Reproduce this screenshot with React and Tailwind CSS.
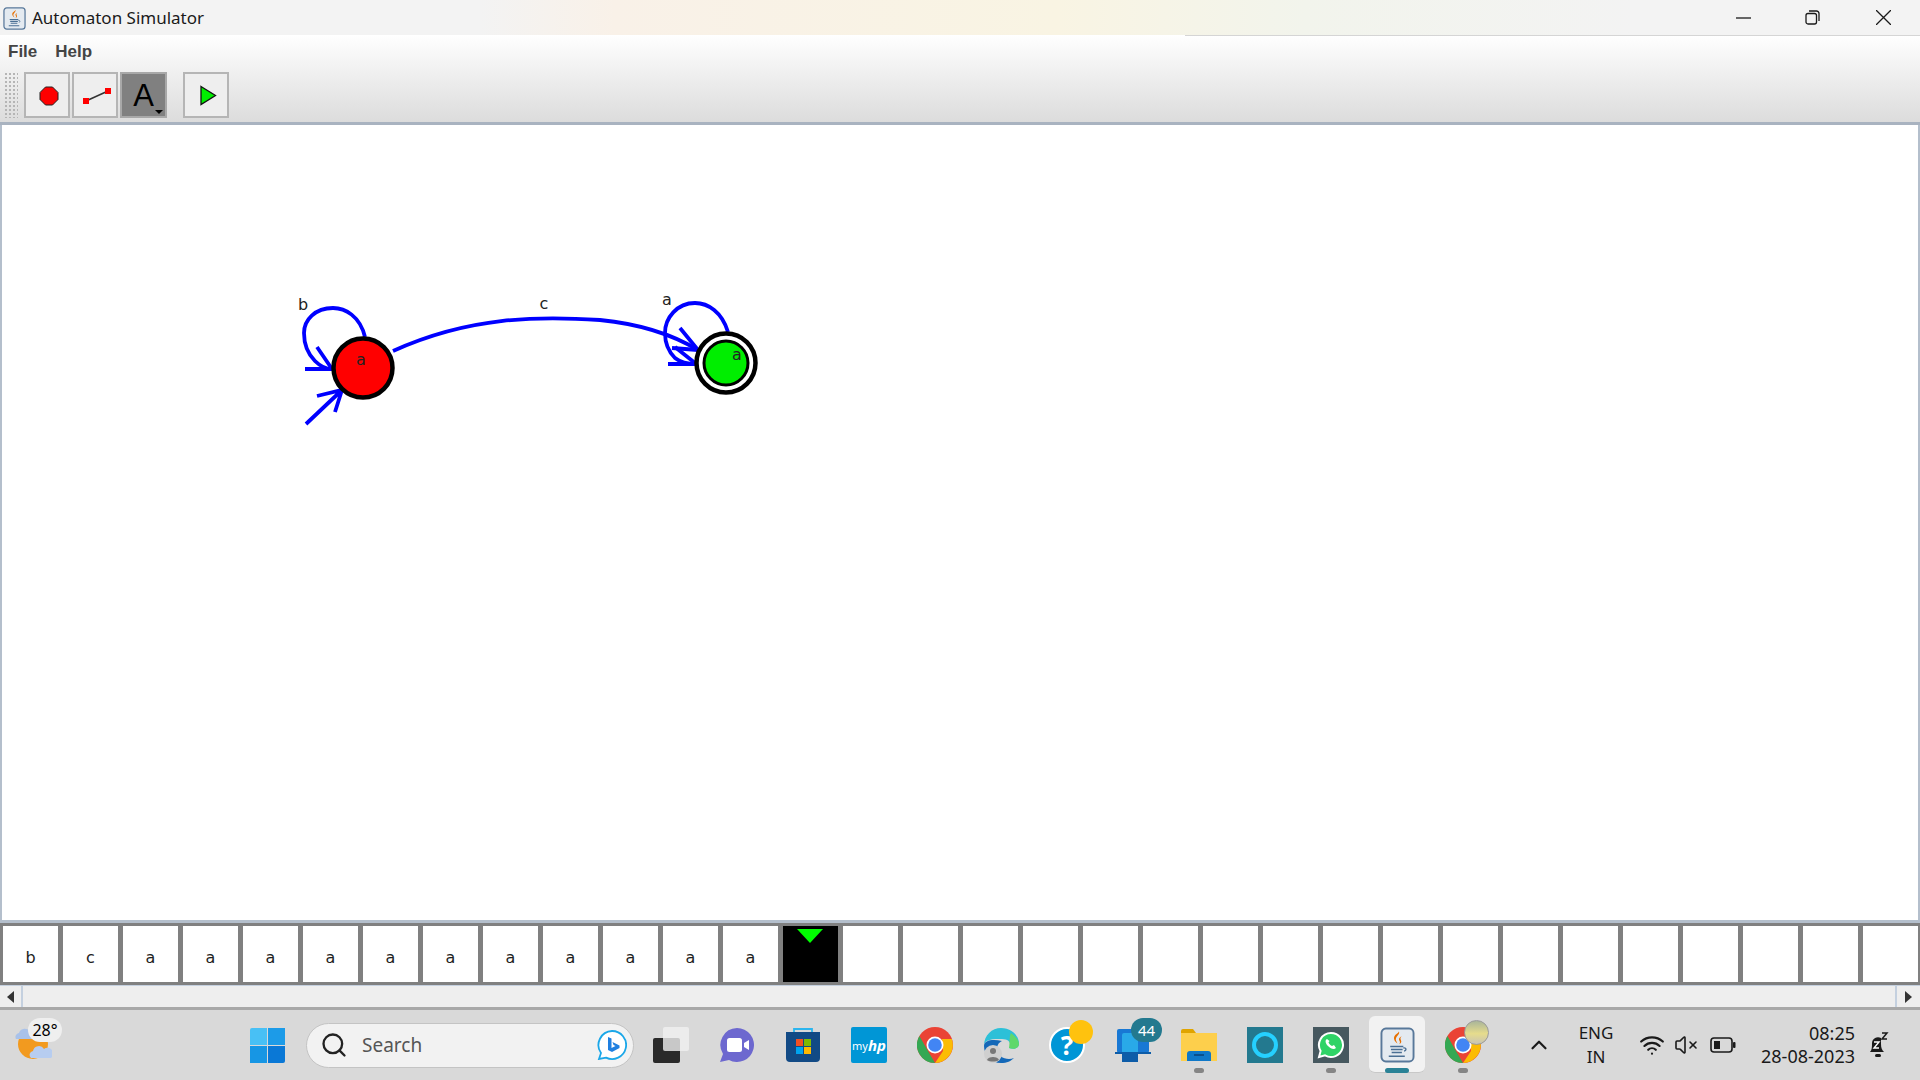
import React from "react";
import { Search, ChevronUp, Wifi, VolumeX } from "lucide-react";

const TAPE = ["b", "c", "a", "a", "a", "a", "a", "a", "a", "a", "a", "a", "a"];
const CELLS = Array.from({ length: 32 }, (_, i) => i);

const JavaIcon = ({ width = 23, height = 23 }) => (
  <svg width={width} height={height} viewBox="0 0 24 24" preserveAspectRatio="none">
    <rect x="1" y="1" width="22" height="22" rx="3" fill="#e4eaf0" stroke="#58789a" strokeWidth="1.300" />
    <path d="M13 3c1 2-3 3.500-2 6 .3.800.8 1.500 1 2-2-1.500-3-3-2-5 .6-1.100 2.500-1.800 3-3z" fill="#e76f00" />
    <path d="M15 6c-2 1-2.500 2-1.500 3.500.5.800 0 1.500-.5 2 1.500-.5 2-1.700 1.300-2.900-.5-1-.3-1.700.7-2.600z" fill="#e76f00" />
    <path d="M7 13h9M7.500 15h8M8 17h7M6 19.500h11" stroke="#4a6f94" strokeWidth="1.100" fill="none" />
    <path d="M16 14c2-.5 2.500 1.500.5 2" stroke="#4a6f94" strokeWidth=".9" fill="none" />
  </svg>
);

const ChromeIcon = () => (
  <svg width="36" height="36" viewBox="0 0 36 36">
    <circle cx="18" cy="18" r="18" fill="#ea4335" />
    <path d="M18 36A18 18 0 0 1 2.400 9L11 24z" fill="#34a853" />
    <path d="M18 36l8-12-1-12h9.800A18 18 0 0 1 18 36z" fill="#fbbc04" />
    <circle cx="18" cy="18" r="8.500" fill="#fff" />
    <circle cx="18" cy="18" r="6.800" fill="#4285f4" />
  </svg>
);

const TaskIcon = ({ children, dot, active }) => (
  <div className="relative w-[66px] h-full flex items-center justify-center">
    {active && <div className="absolute left-[5px] top-[6px] w-[56px] h-[57px] bg-[#f2f2f2] rounded-md border-b border-[#c8c8c8]" />}
    <div className="relative flex items-center justify-center">{children}</div>
    {dot && <div className="absolute bottom-[7px] left-[28px] w-[10px] h-[5px] rounded-full bg-[#858585]" />}
    {active && <div className="absolute bottom-[7px] left-[21px] w-[24px] h-[5px] rounded-full bg-[#2a8296]" />}
  </div>
);

const Toolbar = () => (
  <div className="flex items-start pl-[4px] pt-[4px]">
    <div className="w-[14px] h-[46px] mr-[6px] bg-[radial-gradient(#b5b5b5_1px,transparent_1px)] bg-[length:4px_4px]" />
    <button className="w-[46px] h-[46px] mr-[2px] bg-[#eeeeee] border-2 border-[#b5b5b5] flex items-center justify-center pl-[3px] pt-[1px]">
      <svg width="22" height="22" viewBox="0 0 22 22">
        <path d="M7.500 2h7L20 7.500v7L14.500 20h-7L2 14.500v-7z" fill="#ff0000" stroke="#222" strokeWidth="1" />
      </svg>
    </button>
    <button className="w-[46px] h-[46px] mr-[2px] bg-[#eeeeee] border-2 border-[#b5b5b5] flex items-center justify-center pl-[4px] pt-[2px]">
      <svg width="28" height="16" viewBox="0 0 28 16">
        <path d="M3 13 L25 3" stroke="#333" strokeWidth="1.500" />
        <rect x="0" y="10" width="6" height="6" fill="#ff0000" />
        <rect x="22" y="0" width="6" height="6" fill="#ff0000" />
      </svg>
    </button>
    <button className="relative w-[47px] h-[46px] bg-[#808080] border-2 border-[#a8a8a8] flex items-center justify-center">
      <span className="font-['Liberation_Sans',sans-serif] text-[31px] leading-none text-black">A</span>
      <span className="absolute right-[2px] bottom-[2px] w-0 h-0 border-l-[4px] border-r-[4px] border-t-[4px] border-l-transparent border-r-transparent border-t-black" />
    </button>
    <button className="w-[46px] h-[46px] ml-[16px] bg-[#eeeeee] border-2 border-[#b5b5b5] flex items-center justify-center pl-[4px] pt-[1px]">
      <svg width="18" height="21" viewBox="0 0 18 21">
        <path d="M2 1.500 L16.500 10.500 L2 19.500 z" fill="#00ee00" stroke="#111" strokeWidth="1.300" />
      </svg>
    </button>
  </div>
);

const Diagram = () => (
  <svg width="1920" height="798" viewBox="0 125 1920 798" className="block">
    <g fill="none" stroke="#0000ff" strokeWidth="3.800">
      {/* self loop on a */}
      <path d="M365 337 C360 316 345 308 333 308 C315 308 304 320 304 333 C304 345 309 355 315 361 C320 366 326 369 332 369" />
      <path d="M305 369 H332 M317 347 L332 369" />
      {/* start arrow */}
      <path d="M306 424 L342 390 M317 396 L342 390 L335 412" />
      {/* a to b */}
      <path d="M393 351 C470 316 540 316 600 320 C640 324 670 333 698 350" />
      <path d="M672 348 L698 350 M680 328 L698 350" />
      {/* self loop on b */}
      <path d="M728 332 C722 312 708 303 695 303 C677 303 665 318 665 333 C665 345 670 353 675 358 C680 362 686 364 696 364" />
      <path d="M668 364 H696 M675 347 L695 363" />
    </g>
    <circle cx="363" cy="368" r="29.500" fill="#ff0000" stroke="#000" strokeWidth="4.500" />
    <circle cx="726" cy="363" r="29.500" fill="#fff" stroke="#000" strokeWidth="4.500" />
    <circle cx="726" cy="363" r="22" fill="#00ee00" stroke="#000" strokeWidth="3" />
    <g fontFamily="'DejaVu Sans', sans-serif" fontSize="16" fill="#222">
      <text x="303" y="310" textAnchor="middle">b</text>
      <text x="544" y="309" textAnchor="middle">c</text>
      <text x="667" y="305" textAnchor="middle">a</text>
      <text x="361" y="365" textAnchor="middle">a</text>
      <text x="737" y="360" textAnchor="middle">a</text>
    </g>
  </svg>
);

const Tape = () => (
  <div className="h-[62px] bg-[#808080] pt-[3px] overflow-hidden flex gap-[5px] pl-[3px] shrink-0">
    {CELLS.map((i) => (
      <div
        key={i}
        className={`relative w-[55px] h-[56px] shrink-0 flex items-center justify-center pt-[7px] font-['DejaVu_Sans',sans-serif] text-[16px] text-[#222] ${i === 13 ? "bg-black" : "bg-white"}`}
      >
        {TAPE[i]}
        {i === 13 && (
          <span className="absolute left-[14px] top-[3px] w-0 h-0 border-l-[13px] border-r-[13px] border-t-[14px] border-l-transparent border-r-transparent border-t-[#00ff00]" />
        )}
      </div>
    ))}
  </div>
);

const Taskbar = () => (
  <div className="h-[70px] bg-[#d9d9d9] flex items-center relative font-['Noto_Sans',sans-serif] text-[#1a1a1a]">
    {/* weather */}
    <div className="relative w-[70px] h-full shrink-0">
      <svg width="38" height="36" viewBox="0 0 38 36" className="absolute left-[14px] top-[15px]">
        <circle cx="19" cy="19" r="15" fill="#f29a1f" />
        <path d="M2 14a4 4 0 0 1 3-6 6 6 0 0 1 11-1 4 4 0 0 1 4 7z" fill="#a9c2ea" />
        <path d="M17 33a4 4 0 0 1 2-7 6 6 0 0 1 11-2 5 5 0 0 1 7 9z" fill="#b7cdf0" />
      </svg>
      <span className="absolute left-[28px] top-[8px] w-[34px] h-[24px] rounded-full bg-[#efefef] text-[16px] leading-[24px] text-center text-black">28°</span>
    </div>
    {/* start */}
    <div className="w-[35px] h-[35px] ml-[180px] shrink-0 grid grid-cols-2 gap-[1px]">
      <div className="bg-[#48c0f5] rounded-tl-[2px]" />
      <div className="bg-[#1c9be8]" />
      <div className="bg-[#1796e4]" />
      <div className="bg-[#0a78d6] rounded-br-[2px]" />
    </div>
    {/* search */}
    <div className="ml-[21px] w-[328px] h-[45px] shrink-0 rounded-full bg-[#f2f2f2] border border-[#c4c4c4] flex items-center pl-[13px] pr-[6px]">
      <Search size={28} strokeWidth={2} className="text-[#222]" />
      <span className="ml-[14px] text-[19px] text-[#555] flex-1">Search</span>
      <svg width="30" height="30" viewBox="0 0 30 30">
        <path d="M15 1a14 14 0 1 1-6 26.600L2 29l2-6A14 14 0 0 1 15 1z" fill="#fff" stroke="#1ba7e8" strokeWidth="1.800" />
        <path d="M11 7l3.500 1.500V18l4-2-2-1-1-3 7 3.500V18l-7.500 4L11 20z" fill="#1f7fe0" />
      </svg>
    </div>
    {/* pinned apps */}
    <div className="flex h-full ml-[4px] shrink-0">
      <TaskIcon>
        <div className="relative w-[36px] h-[36px]">
          <div className="absolute left-0 bottom-0 w-[27px] h-[25px] rounded-[2px] bg-[#2a2a2a]" />
          <div className="absolute right-0 top-0 w-[26px] h-[24px] rounded-[2px] bg-[#f0f0f0]/80" />
        </div>
      </TaskIcon>
      <TaskIcon>
        <svg width="36" height="36" viewBox="0 0 36 36">
          <path d="M18 1a17 17 0 1 1-8 32L1 35l3-8A17 17 0 0 1 18 1z" fill="#6d68cf" />
          <rect x="8" y="11" width="15" height="14" rx="2.500" fill="#fff" />
          <path d="M25 16l5-3v10l-5-3z" fill="#fff" />
        </svg>
      </TaskIcon>
      <TaskIcon>
        <svg width="36" height="36" viewBox="0 0 36 36">
          <path d="M9 6V2h18v4" fill="none" stroke="#2cb5ee" strokeWidth="1.800" />
          <path d="M1 5h34v26a4 4 0 0 1-4 4H5a4 4 0 0 1-4-4z" fill="#124a85" />
          <rect x="11" y="12" width="7" height="7" fill="#f25022" />
          <rect x="19" y="12" width="7" height="7" fill="#7fba00" />
          <rect x="11" y="20" width="7" height="7" fill="#00a4ef" />
          <rect x="19" y="20" width="7" height="7" fill="#ffb900" />
        </svg>
      </TaskIcon>
      <TaskIcon>
        <div className="w-[36px] h-[36px] bg-[#0096d6] rounded-[2px] flex items-center justify-center text-white text-[11px] leading-none">
          my<span className="italic font-bold text-[15px]">hp</span>
        </div>
      </TaskIcon>
      <TaskIcon><ChromeIcon /></TaskIcon>
      <TaskIcon>
        <svg width="36" height="36" viewBox="0 0 36 36">
          <path d="M1 19C1 8 9 1 18 1c10 0 18 7 18 16 0 4-5 6-10 4 3-3 1-9-7-9-9 0-18 0-18 7z" fill="#2cc0d8" />
          <path d="M28 6c4 3 8 7 8 11 0 4-5 6-10 4 1-5 0-11 2-15z" fill="#5fd86a" />
          <path d="M1 19c0 9 7 17 17 17 6 0 10-2 13-5-7 3-17-1-17-9 0-3 1-6 5-8-9-2-18-1-18 5z" fill="#1468b8" />
          <circle cx="10" cy="27" r="9" fill="#cfcfcf" />
          <circle cx="10" cy="24" r="3" fill="#777" />
          <path d="M4 33c1-4 11-4 12 0-3 2-9 2-12 0z" fill="#777" />
        </svg>
      </TaskIcon>
      <TaskIcon>
        <div className="relative w-[36px] h-[36px] rounded-full bg-[#0096d6] border-2 border-white flex items-center justify-center text-white font-bold text-[26px] leading-none">
          ?
          <span className="absolute -right-[10px] -top-[9px] w-[24px] h-[24px] rounded-full bg-[#ffc20e]" />
        </div>
      </TaskIcon>
      <TaskIcon>
        <div className="relative w-[36px] h-[36px]">
          <svg width="36" height="36" viewBox="0 0 36 36">
            <rect x="2" y="2" width="32" height="24" rx="2" fill="#1878d4" />
            <rect x="7" y="6" width="16" height="28" rx="2" fill="#29a9e8" />
            <rect x="0" y="25" width="36" height="2" fill="#0d5ca8" />
            <rect x="7" y="27" width="16" height="8" fill="#0d5ca8" />
          </svg>
          <span className="absolute -right-[11px] -top-[9px] w-[31px] h-[24px] rounded-full bg-[#23798f] text-white text-[15px] leading-[24px] text-center">44</span>
        </div>
      </TaskIcon>
      <TaskIcon dot>
        <svg width="36" height="36" viewBox="0 0 36 36">
          <path d="M0 4a2 2 0 0 1 2-2h10l3 4h21v4H0z" fill="#e0a400" />
          <rect x="0" y="6" width="36" height="28" fill="#fdcf4c" />
          <path d="M6 27a3 3 0 0 1 3-3h18a3 3 0 0 1 3 3v7H6z" fill="#0f78c8" />
          <rect x="13" y="27" width="10" height="2" fill="#0a4f8c" />
        </svg>
      </TaskIcon>
      <TaskIcon>
        <div className="w-[36px] h-[36px] bg-[#23798f] flex items-center justify-center">
          <div className="w-[26px] h-[26px] rounded-full border-[4px] border-[#25d0ff]" />
        </div>
      </TaskIcon>
      <TaskIcon dot>
        <div className="w-[36px] h-[36px] bg-[#46585f] flex items-center justify-center">
          <svg width="28" height="28" viewBox="0 0 28 28">
            <path d="M14 2a12 12 0 1 1-6 22.400L2 26l1.600-6A12 12 0 0 1 14 2z" fill="#2fd366" stroke="#fff" strokeWidth="2" />
            <path d="M10 8c-2 1-2 4 1 7s6 4 8 2l-2-3-2 1c-1-.5-3-2-3.500-3.500l1-1.500z" fill="#fff" />
          </svg>
        </div>
      </TaskIcon>
      <TaskIcon active>
        <JavaIcon width={35} height={36} />
      </TaskIcon>
      <TaskIcon dot>
        <div className="relative w-[36px] h-[36px]">
          <ChromeIcon />
          <span className="absolute -right-[8px] -top-[7px] w-[25px] h-[25px] rounded-full bg-[linear-gradient(180deg,#a9b59a_0%,#e6dc8c_55%,#c9c4b4_100%)] border border-[#9a9a9a]" />
        </div>
      </TaskIcon>
    </div>
    {/* tray */}
    <ChevronUp size={26} strokeWidth={2} className="ml-[30px] shrink-0 text-[#1a1a1a]" />
    <div className="w-[58px] ml-[15px] text-center text-[17px] leading-[24px] shrink-0">
      <div>ENG</div>
      <div>IN</div>
    </div>
    <Wifi size={26} strokeWidth={2} className="ml-[14px] shrink-0" />
    <VolumeX size={24} strokeWidth={1.600} className="ml-[9px] shrink-0" />
    <svg width="26" height="16" viewBox="0 0 26 16" className="ml-[12px] shrink-0">
      <rect x="1" y="1" width="21" height="14" rx="3" fill="none" stroke="#1a1a1a" strokeWidth="1.600" />
      <rect x="4" y="4" width="6" height="8" fill="#1a1a1a" />
      <rect x="23" y="5" width="2.500" height="6" rx="1" fill="#1a1a1a" />
    </svg>
    <div className="w-[115px] text-right text-[18px] leading-[23px] shrink-0 ml-[4px]">
      <div>08:25</div>
      <div>28-08-2023</div>
    </div>
    <svg width="22" height="28" viewBox="0 0 22 28" className="ml-[12px] shrink-0">
      <path d="M3 21c2-2 2-5 2-9a6 6 0 0 1 9-5v6c0 4 1 6 3 8z" fill="#1a1a1a" />
      <rect x="8" y="23" width="6" height="3" rx="1.500" fill="#1a1a1a" />
      <path d="M7 11h5l-5 6h5" stroke="#fff" strokeWidth="1.400" fill="none" />
      <path d="M15 2h5l-5 6h5" stroke="#1a1a1a" strokeWidth="1.500" fill="none" />
    </svg>
  </div>
);

export default function App() {
  return (
    <div className="w-[1920px] h-[1080px] overflow-hidden flex flex-col bg-white">
      {/* Title bar */}
      <div className="relative h-[35px] shrink-0 flex items-center bg-[linear-gradient(90deg,#f3f3f3_25%,#f9f1e8_32%,#f9f4e3_55%,#f2f4ec_68%,#f3f3f3_85%)]">
        <div className="ml-[3px] mr-[6px] mt-[1px]">
          <JavaIcon />
        </div>
        <span className="font-['Noto_Sans',sans-serif] text-[17px] text-[#1a1a1a] flex-1">Automaton Simulator</span>
        <svg width="15" height="15" viewBox="0 0 15 15" className="mr-[54px]">
          <path d="M0 8h15" stroke="#1a1a1a" strokeWidth="1.300" />
        </svg>
        <svg width="15" height="15" viewBox="0 0 15 15" className="mr-[56px]">
          <rect x="1" y="3.500" width="10.500" height="10.500" rx="2" fill="none" stroke="#1a1a1a" strokeWidth="1.300" />
          <path d="M4 1h7.500A2.500 2.500 0 0 1 14 3.500V11" fill="none" stroke="#1a1a1a" strokeWidth="1.300" />
        </svg>
        <svg width="15" height="15" viewBox="0 0 15 15" className="mr-[29px]">
          <path d="M0 0L15 15M15 0L0 15" stroke="#1a1a1a" strokeWidth="1.300" />
        </svg>
        <div className="absolute left-[1185px] right-0 top-[35px] h-px bg-[#d5d5d5] z-10" />
      </div>

      {/* Menu and toolbar */}
      <div className="h-[90px] shrink-0 bg-gradient-to-b from-white to-[#dcdcdc] border-b-[3px] border-[#a9b3c0]">
        <div className="h-[33px] flex items-center gap-[18px] pl-[8px] font-['Liberation_Sans',sans-serif] font-bold text-[17px] text-[#444]">
          <span>File</span>
          <span>Help</span>
        </div>
        <Toolbar />
      </div>

      {/* Canvas */}
      <div className="flex-1 min-h-0 bg-white border-x-[2px] border-b-[3px] border-[#b4bfcc] overflow-hidden">
        <div className="-ml-[2px]">
          <Diagram />
        </div>
      </div>

      <Tape />

      {/* Scrollbar */}
      <div className="h-[25px] shrink-0 bg-[#eeeeee] border-t border-[#c4d0df] border-b-[3px] border-b-[#a8a8a8] flex justify-between">
        <div className="w-[23px] border-r-2 border-[#c4d0df] flex items-center justify-center">
          <span className="w-0 h-0 border-y-[6px] border-r-[7px] border-y-transparent border-r-[#333]" />
        </div>
        <div className="w-[25px] border-l-2 border-[#c4d0df] flex items-center justify-center">
          <span className="w-0 h-0 border-y-[6px] border-l-[7px] border-y-transparent border-l-[#333]" />
        </div>
      </div>

      <Taskbar />
    </div>
  );
}
